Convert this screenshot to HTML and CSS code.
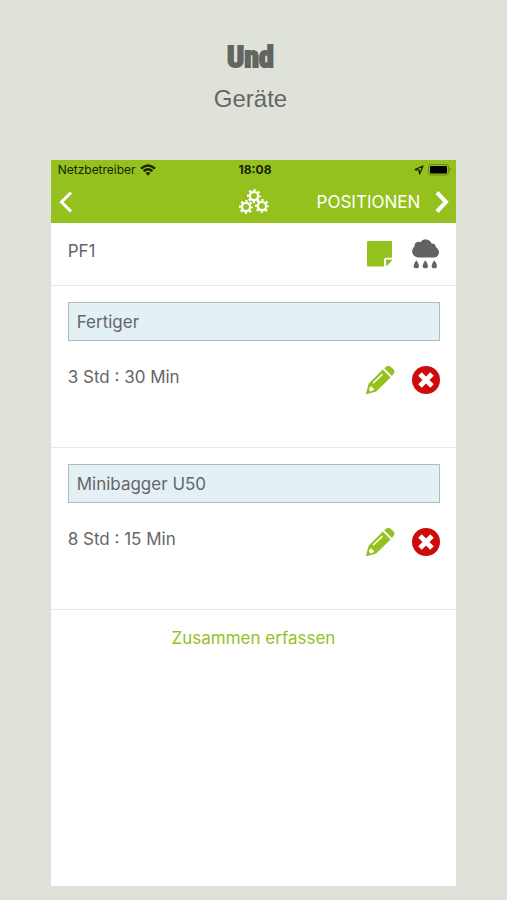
FILE: index.html
```html
<!DOCTYPE html>
<html lang="de">
<head>
<meta charset="utf-8">
<meta name="viewport" content="width=device-width, initial-scale=1">
<title>Geräte</title>
<link rel="stylesheet" href="styles.css">
</head>
<body>
<svg class="defs" aria-hidden="true">
  <symbol id="gear" viewBox="0 0 16 16">
    <circle cx="8" cy="8" r="4.7" fill="none" stroke="currentColor" stroke-width="2.6"/>
    <circle cx="8" cy="8" r="6.8" fill="none" stroke="currentColor" stroke-width="2.4" pathLength="80" stroke-dasharray="5 5" stroke-dashoffset="2.5"/>
  </symbol>
  <symbol id="pencil" viewBox="0 0 30 30">
    <path fill="currentColor" d="M17.800 4.600 25.600 12.400 11.200 26.400 1.800 29.200 1 28.400 3.600 18.800Z"/>
    <path fill="currentColor" d="M19.200 3.200 21.800 1.200Q23.800 0 25.700 1.700L28.600 4.600Q30.200 6.400 28.900 8.300L26.900 11Z"/>
    <path fill="none" stroke="#fff" stroke-width="1.500" stroke-linecap="round" d="M8.500 17.700 17 9.600"/>
    <path fill="#fff" d="M5 22 6.800 21.200 7.400 23 9.300 23.500 8.700 25.200 5.700 26.400 3.800 24.700Z"/>
  </symbol>
  <symbol id="remove" viewBox="0 0 28 28">
    <circle cx="14" cy="14" r="14" fill="currentColor"/>
    <path fill="none" stroke="#fff" stroke-width="5" stroke-linejoin="round" d="m8 8 12 12m0-12L8 20"/>
  </symbol>
</svg>
<main class="page">
  <header class="intro">
    <h1>Und</h1>
    <p>Geräte</p>
  </header>
  <section class="phone">
    <div class="top">
      <div class="status">
        <span class="carrier">Netzbetreiber
          <svg width="16" height="12" viewBox="0 0 16 12" aria-hidden="true"><g fill="none" stroke="currentColor" stroke-width="2.400"><path d="M1 4.600Q8-1.800 15 4.600M3.600 7.200Q8 3.200 12.400 7.200"/></g><path fill="currentColor" d="M5.600 9.100Q8 7 10.400 9.100L8 11.700Z"/></svg>
        </span>
        <strong>18:08</strong>
        <span class="power">
          <svg width="10" height="10" viewBox="0 0 10 10" aria-hidden="true"><path fill="none" stroke="currentColor" stroke-width="1.300" stroke-linejoin="round" d="M9 1 1 4.600 5 5.200 5.600 9Z"/></svg>
          <svg width="24" height="12" viewBox="0 0 24 12" aria-hidden="true"><rect x=".5" y=".5" width="20" height="10.500" rx="2.500" fill="none" stroke="#6b8b18"/><rect x="2" y="2" width="17" height="7.500" rx="1" fill="#000"/><path fill="#587512" d="M21.700 3.800q2.200 2 0 4Z"/></svg>
        </span>
      </div>
      <nav class="nav">
        <button class="back" aria-label="Zurück"><svg width="14" height="22" viewBox="0 0 14 22" aria-hidden="true"><path fill="none" stroke="currentColor" stroke-width="3" d="M12 1.500 2.500 11l9.500 9.500"/></svg></button>
        <svg class="gears" width="30" height="26" viewBox="0 0 30 26" aria-hidden="true"><use href="#gear" x="8" y="0" width="14" height="14"/><use href="#gear" x="0" y="11" width="14" height="14"/><use href="#gear" x="16" y="10" width="14" height="14"/></svg>
        <a class="next" href="#positionen">POSITIONEN
          <svg width="14" height="22" viewBox="0 0 14 22" aria-hidden="true"><path fill="none" stroke="currentColor" stroke-width="4" d="m2 1.500 9 9.500-9 9.500"/></svg>
        </a>
      </nav>
    </div>
    <div class="project">
      <span>PF1</span>
      <div class="actions">
        <button aria-label="Notiz"><svg width="28" height="30" viewBox="0 0 28 30" aria-hidden="true"><path fill="#95c11f" d="M2 2H25Q26 2 26 3V18.700H20Q18 18.700 18 20.700V27.500H2Q1 27.500 1 26.500V3Q1 2 2 2ZM20 20.600H26Q26 21.700 25 22.700L22 25.800Q21 26.800 20 27.200Z"/></svg></button>
        <button aria-label="Wetter"><svg width="28" height="30" viewBox="0 0 28 30" aria-hidden="true"><path fill="#626262" d="M6.500 18.500A6.300 6.300 0 0 1 3.600 7.300Q3.200 3.800 6.500 2.900 8.200 2.400 9.500 3.200 11.700-.1 15.500.4 19.400.9 20.500 4.500 24.300 4 25 8.200 28.200 10.300 28 13.200 27.600 18.500 22.500 18.500Z"/><g fill="#626262"><path id="drop" d="M5.300 21.300Q8 25 8 26.700A2.700 2.600 0 0 1 2.600 26.700Q2.600 25 5.300 21.300Z"/><use href="#drop" x="9"/><use href="#drop" x="18"/></g></svg></button>
      </div>
    </div>
    <article class="device">
      <input type="text" value="Fertiger" aria-label="Gerät 1">
      <div class="entry">
        <span>3 Std : 30 Min</span>
        <div class="actions">
          <button class="edit" aria-label="Fertiger bearbeiten"><svg width="30" height="30"><use href="#pencil"/></svg></button>
          <button class="remove" aria-label="Fertiger löschen"><svg width="28" height="28"><use href="#remove"/></svg></button>
        </div>
      </div>
    </article>
    <article class="device">
      <input type="text" value="Minibagger U50" aria-label="Gerät 2">
      <div class="entry">
        <span>8 Std : 15 Min</span>
        <div class="actions">
          <button class="edit" aria-label="Minibagger U50 bearbeiten"><svg width="30" height="30"><use href="#pencil"/></svg></button>
          <button class="remove" aria-label="Minibagger U50 löschen"><svg width="28" height="28"><use href="#remove"/></svg></button>
        </div>
      </div>
    </article>
    <button class="together">Zusammen erfassen</button>
  </section>
</main>
</body>
</html>
```
FILE: styles.css
```css
* { box-sizing: border-box; }
body {
  margin: 0;
  background: #dfe2d9;
  color: #666;
  font: 17px/24px Inter, Roboto, sans-serif;
}
button {
  padding: 0;
  border: 0;
  background: none;
  color: inherit;
  font: inherit;
  cursor: pointer;
}
svg { display: block; flex: none; }
.defs { position: absolute; width: 0; height: 0; }
.page {
  display: flex;
  flex-direction: column;
  min-height: 100vh;
  padding: 40px 10% 14px;
}
.intro { padding: 0 6px 46px 0; text-align: center; }
.intro h1 {
  margin: 0;
  font: bold 30px/34px "Liberation Sans Narrow", "Roboto Condensed", "Liberation Sans", sans-serif;
  color: #626561;
  -webkit-text-stroke: 2px #626561;
}
.intro p {
  margin: 10px 0 0;
  font: 24px/30px "Liberation Sans", Arial, sans-serif;
}
.phone {
  display: flex;
  flex: 1;
  flex-direction: column;
  background: #fff;
}
.top { background: #95c11f; color: #fff; }
.status {
  display: grid;
  grid-template-columns: 1fr auto 1fr;
  align-items: center;
  height: 20px;
  padding: 0 4px 0 7px;
  color: #1b2400;
  font-size: 12px;
  line-height: 20px;
}
.carrier, .power { display: flex; align-items: center; gap: 4px; }
.power { justify-content: flex-end; }
.nav {
  display: grid;
  grid-template-columns: 1fr auto 1fr;
  align-items: center;
  height: 43px;
  padding: 0 7px 0 8px;
}
.back { justify-self: start; }
.next {
  display: flex;
  align-items: center;
  justify-self: end;
  gap: 15px;
  color: inherit;
  text-decoration: none;
}
.project, .entry { display: flex; justify-content: space-between; }
.project {
  height: 63px;
  padding: 16px 17px 0;
  border-bottom: 1px solid #e8e8e8;
}
.actions { display: flex; gap: 17px; }
.actions button { height: 30px; }
.device {
  height: 162px;
  padding: 16px 16px 0 17px;
  border-bottom: 1px solid #e8e8e8;
}
.device input {
  display: block;
  width: 100%;
  height: 39px;
  padding: 0 8px;
  border: 1px solid #b0bdc0;
  border-radius: 0;
  background: #e3f1f7;
  color: #666;
  font: inherit;
}
.entry { padding-top: 24px; }
.edit { color: #95c11f; }
.remove { color: #cf0a0a; }
.together { padding: 16px; color: #95c11f; }
```
